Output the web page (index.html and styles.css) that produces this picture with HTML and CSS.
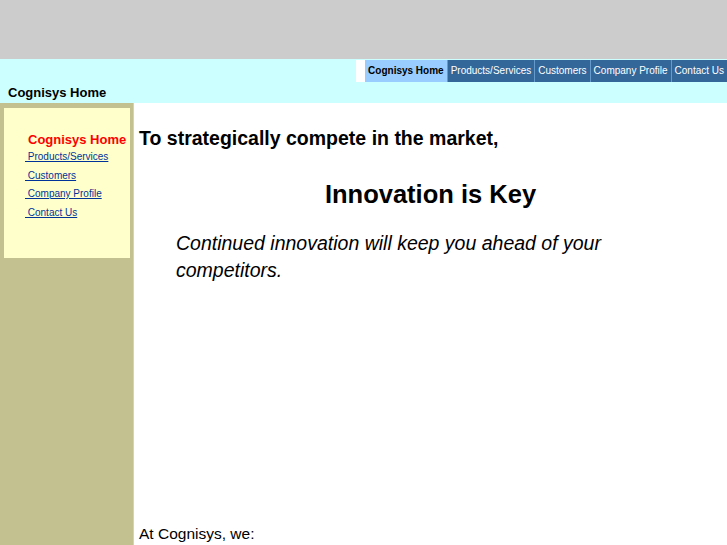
FILE: index.html
```html
<!DOCTYPE html>
<html lang="en">
<head>
  <meta charset="UTF-8">
  <title>Cognisys Home</title>
  <link rel="stylesheet" href="styles.css">
</head>
<body>
  <div class="topbar"></div>

  <div class="navband">
    <div class="navrow">
      <span class="navgap"></span>
      <a class="tab current" href="#">Cognisys Home</a>
      <a class="tab" href="#">Products/Services</a>
      <a class="tab" href="#">Customers</a>
      <a class="tab" href="#">Company Profile</a>
      <a class="tab" href="#">Contact Us</a>
    </div>
    <div class="pagetitle">Cognisys Home</div>
  </div>

  <div class="layout">
    <div class="sidebar">
      <div class="sidebox">
        <div class="sidecurrent">Cognisys Home</div>
        <a class="sidelink" href="#">&nbsp;Products/Services</a>
        <a class="sidelink" href="#">&nbsp;Customers</a>
        <a class="sidelink" href="#">&nbsp;Company Profile</a>
        <a class="sidelink" href="#">&nbsp;Contact Us</a>
      </div>
    </div>

    <div class="main">
      <h2 class="lead">To strategically compete in the market,</h2>
      <h1 class="key">Innovation is Key</h1>
      <p class="quote">Continued innovation will keep you ahead of your competitors.</p>
      <p class="atco">At Cognisys, we:</p>
    </div>
  </div>
</body>
</html>
```

FILE: styles.css
```css
body {
  margin: 0;
  font-family: "Liberation Sans", Arial, sans-serif;
  color: #000;
  background: #fff;
}
.topbar {
  height: 59px;
  background: #cccccc;
}
.navband {
  background: #ccffff;
  height: 44px;
}
.navrow {
  display: flex;
  justify-content: flex-end;
  padding-top: 1px;
  height: 22px;
}
.navgap {
  width: 9px;
  background: #fff;
}
.tab {
  display: flex;
  align-items: center;
  padding: 0 3px 2px;
  font-size: 10px;
  color: #fff;
  background: #336699;
  text-decoration: none;
  border-left: 1px solid #6699cc;
}
.tab.current {
  background: #99ccff;
  color: #000;
  font-weight: bold;
  border-left: none;
}
.pagetitle {
  font-size: 13px;
  font-weight: bold;
  padding: 3px 0 0 8px;
}
.layout {
  display: flex;
  min-height: 442px;
}
.sidebar {
  width: 134px;
  background: #c4c191;
  border-right: 1px solid #d6d4b0;
  padding: 5px 0 0 4px;
  box-sizing: border-box;
  flex-shrink: 0;
}
.sidebox {
  width: 126px;
  height: 150px;
  background: #ffffcc;
  padding: 24px 0 0 21px;
  box-sizing: border-box;
}
.sidecurrent {
  color: #ff0000;
  font-weight: bold;
  font-size: 13px;
  margin: 0 0 4px 3px;
}
.sidelink {
  display: block;
  font-size: 10px;
  color: #003399;
  margin-bottom: 7.5px;
}
.main {
  flex: 1;
  padding: 0 5px;
}
.lead {
  font-size: 19.5px;
  margin: 24px 0 0;
}
.key {
  font-size: 25.5px;
  text-align: center;
  margin: 30px 0 0;
}
.quote {
  font-size: 19.5px;
  font-style: italic;
  line-height: 27px;
  margin: 21px 37px 0;
}
.atco {
  font-size: 15.5px;
  margin: 241px 0 0;
}
```
